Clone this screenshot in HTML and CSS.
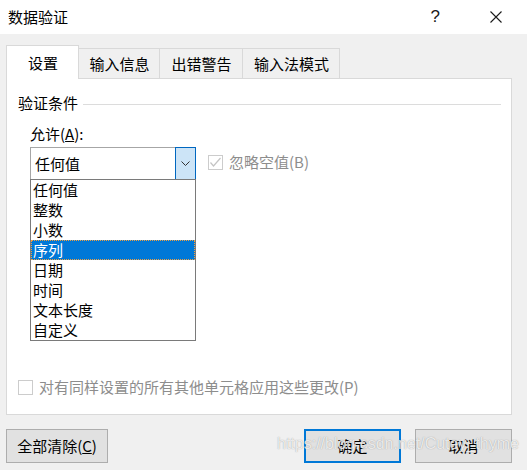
FILE: index.html
```html
<!DOCTYPE html>
<html lang="zh-CN">
<head>
    <meta charset="UTF-8">
    <title>数据验证</title>
    <link rel="stylesheet" href="styles.css">
</head>
<body>

<div class="dialog">
    <div class="titlebar">
        <span class="title">数据验证</span>
        <span class="help">?</span>
        <svg class="close" width="12" height="12" viewBox="0 0 12 12">
            <path d="M0.5 0.5 L11.5 11.5 M11.5 0.5 L0.5 11.5" stroke="#1a1a1a" stroke-width="1.1" fill="none"/>
        </svg>
    </div>

    <div class="body">
        <div class="tabs">
            <div class="tab active">设置</div>
            <div class="tab">输入信息</div>
            <div class="tab">出错警告</div>
            <div class="tab last">输入法模式</div>
        </div>

        <div class="panel">
            <div class="legend">
                <span>验证条件</span>
                <div class="rule"></div>
            </div>

            <div class="field">
                <div class="label">允许(<u>A</u>):</div>
                <div class="combo-row">
                    <div class="combo">
                        <span class="combo-value">任何值</span>
                        <div class="combo-btn">
                            <svg width="9" height="5" viewBox="0 0 9 5">
                                <path d="M0.5 0.5 L4.5 4.5 L8.5 0.5" stroke="#333" stroke-width="1" fill="none"/>
                            </svg>
                        </div>
                        <ul class="dropdown">
                            <li>任何值</li>
                            <li>整数</li>
                            <li>小数</li>
                            <li class="selected">序列</li>
                            <li>日期</li>
                            <li>时间</li>
                            <li>文本长度</li>
                            <li>自定义</li>
                        </ul>
                    </div>
                    <label class="check disabled">
                        <span class="box">
                            <svg width="13" height="13" viewBox="0 0 13 13">
                                <path d="M1.5 6.5 L4.5 10 L11.5 2" stroke="#c4c4c4" stroke-width="1.2" fill="none"/>
                            </svg>
                        </span>
                        忽略空值(B)
                    </label>
                </div>
            </div>

            <label class="check apply">
                <span class="box"></span>
                对有同样设置的所有其他单元格应用这些更改(P)
            </label>
        </div>

        <div class="buttons">
            <button class="btn">全部清除(<u>C</u>)</button>
            <div class="spacer"></div>
            <button class="btn default">确定</button>
            <button class="btn">取消</button>
        </div>
    </div>

    <div class="watermark">https://blog.csdn.net/Cutey_thyme</div>
</div>

</body>
</html>
```

FILE: styles.css
```css
body {
    margin: 0;
    font-family: "Noto Sans CJK SC", "Noto Sans", sans-serif;
    font-size: 15px;
    color: #000;
    background-color: #f0f0f0;
}

.dialog {
    position: relative;
    width: 527px;
    height: 470px;
    background-color: #f0f0f0;
    overflow: hidden;
}

.titlebar {
    height: 34px;
    background-color: #fff;
    display: flex;
    align-items: center;
    padding-left: 8px;
}

.title {
    flex: 1;
    line-height: 20px;
}

.help {
    font-family: "Liberation Sans", sans-serif;
    font-size: 17px;
    color: #1a1a1a;
    margin-right: 50px;
}

.close {
    margin-right: 25px;
}

.body {
    padding: 11px 15px 0 6px;
}

.tabs {
    display: flex;
    align-items: flex-end;
    height: 33px;
    position: relative;
    z-index: 1;
}

.tab {
    height: 30px;
    line-height: 29px;
    padding: 0 9px 0 10px;
    border: 1px solid #d9d9d9;
    border-bottom: none;
    border-left: none;
    background-color: #f0f0f0;
    box-sizing: border-box;
    text-align: center;
}

.tab.active {
    width: 73px;
    height: 34px;
    line-height: 34px;
    border-left: 1px solid #d9d9d9;
    background-color: #fff;
    margin-bottom: -1px;
}

.tab:nth-child(2) {
    width: 81px;
}

.tab:nth-child(3) {
    width: 83px;
}

.tab.last {
    width: 97px;
}

.panel {
    height: 337px;
    box-sizing: border-box;
    background-color: #fff;
    border: 1px solid #d9d9d9;
    padding: 13px 10px 0 11px;
    display: flex;
    flex-direction: column;
}

.legend {
    display: flex;
    align-items: center;
    height: 22px;
}

.legend span {
    line-height: 20px;
    margin-right: 5px;
}

.rule {
    flex: 1;
    height: 1px;
    background-color: #dcdcdc;
    margin-top: 2px;
}

.field {
    padding-left: 12px;
    margin-top: 9px;
}

.label {
    line-height: 22px;
    height: 22px;
}

.combo-row {
    display: flex;
    align-items: flex-start;
    margin-top: 2px;
}

.combo {
    position: relative;
    width: 166px;
    height: 33px;
    box-sizing: border-box;
    border: 1px solid #a6a6a6;
    display: flex;
    align-items: center;
}

.combo-value {
    flex: 1;
    padding-left: 4px;
    line-height: 20px;
}

.combo-btn {
    width: 21px;
    height: 33px;
    margin: -1px -1px -1px 0;
    box-sizing: border-box;
    border: 1px solid #0067c0;
    background-color: #cce4f7;
    display: flex;
    align-items: center;
    justify-content: center;
}

.dropdown {
    position: absolute;
    top: 31px;
    left: -1px;
    width: 166px;
    box-sizing: border-box;
    margin: 0;
    padding: 0;
    list-style-type: none;
    background-color: #fff;
    border: 1px solid #7a7a7a;
    z-index: 2;
}

.dropdown li {
    height: 20px;
    line-height: 20px;
    padding-left: 2px;
    box-sizing: border-box;
}

.dropdown li.selected {
    background-color: #0078d7;
    color: #fff;
    border: 1px dotted #f0a040;
    padding-left: 1px;
    line-height: 18px;
}

.check {
    display: flex;
    align-items: center;
    line-height: 20px;
}

.box {
    width: 15px;
    height: 15px;
    box-sizing: border-box;
    border: 1px solid #333;
    background-color: #fff;
    display: flex;
    align-items: center;
    justify-content: center;
    margin-right: 6px;
}

.check.disabled {
    color: #8d8d8d;
    margin-left: 12px;
    margin-top: 5px;
}

.check.disabled .box {
    border-color: #cccccc;
}

.check.apply {
    color: #8d8d8d;
    margin-top: auto;
    margin-bottom: 17px;
}

.check.apply .box {
    border-color: #cccccc;
}

.buttons {
    display: flex;
    margin-top: 14px;
    gap: 14px;
}

.spacer {
    flex: 1;
}

.btn {
    font-family: "Noto Sans CJK SC", "Noto Sans", sans-serif;
    font-size: 15px;
    height: 34px;
    width: 97px;
    background-color: #e1e1e1;
    border: 1px solid #adadad;
    padding: 0;
    color: #000;
    line-height: 20px;
}

.btn:first-child {
    width: 102px;
}

.btn.default {
    border: 2px solid #0078d7;
}

.watermark {
    position: absolute;
    left: 277px;
    top: 435px;
    font-family: "Liberation Sans", sans-serif;
    font-size: 16px;
    color: rgba(255, 255, 255, 0.8);
    text-shadow: 0 0 1px rgba(110, 110, 110, 0.7);
    pointer-events: none;
}
```
